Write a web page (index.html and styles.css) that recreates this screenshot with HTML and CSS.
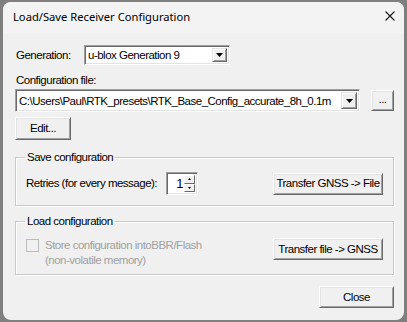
FILE: index.html
```html
<!DOCTYPE html>
<html>
<head>
<meta charset="utf-8">
<link rel="stylesheet" href="styles.css">
</head>
<body>
<div class="win">
  <div class="titlebar">
    <span class="title">Load/Save Receiver Configuration</span>
    <svg class="xicon" width="10" height="10" viewBox="0 0 10 10"><path d="M0.5 0.5 L9.5 9.5 M9.5 0.5 L0.5 9.5" stroke="#1a1a1a" stroke-width="1.1" fill="none"/></svg>
  </div>
  <div class="client">
    <div class="row gen">
      <span class="lbl gen-lbl">Generation:</span>
      <div class="combo gen-combo">
        <span class="val">u-blox Generation 9</span>
        <span class="drop"><svg width="7" height="4" viewBox="0 0 7 4"><path d="M0 0 H7 L3.5 4 Z" fill="#000"/></svg></span>
      </div>
    </div>
    <div class="lbl cfg-lbl">Configuration file:</div>
    <div class="row file">
      <div class="combo file-combo">
        <span class="val">C:\Users\Paul\RTK_presets\RTK_Base_Config_accurate_8h_0.1m</span>
        <span class="drop"><svg width="7" height="4" viewBox="0 0 7 4"><path d="M0 0 H7 L3.5 4 Z" fill="#000"/></svg></span>
      </div>
      <button class="btn dots">...</button>
    </div>
    <button class="btn edit">Edit...</button>
    <fieldset class="grp save">
      <legend>Save configuration</legend>
      <div class="row grp-row">
        <span class="lbl">Retries (for every message):</span>
        <div class="spin">
          <span class="spin-val">1</span>
          <span class="spin-btns">
            <span class="sb"><svg width="3" height="2" viewBox="0 0 3 2"><path d="M1.5 0 L3 2 H0 Z" fill="#000"/></svg></span>
            <span class="sb"><svg width="3" height="2" viewBox="0 0 3 2"><path d="M0 0 H3 L1.5 2 Z" fill="#000"/></svg></span>
          </span>
        </div>
        <button class="btn xfer">Transfer GNSS -&gt; File</button>
      </div>
    </fieldset>
    <fieldset class="grp load">
      <legend>Load configuration</legend>
      <div class="row grp-row load-row">
        <span class="chk"></span>
        <span class="chk-lbl">Store configuration intoBBR/Flash<br>(non-volatile memory)</span>
        <button class="btn xfer xfer2">Transfer file -&gt; GNSS</button>
      </div>
    </fieldset>
    <div class="foot">
      <button class="btn closebtn">Close</button>
    </div>
  </div>
</div>
</body>
</html>
```

FILE: styles.css
```css
html, body {
  margin: 0;
  padding: 0;
  background: #7f7f7f;
  width: 407px;
  height: 322px;
  overflow: hidden;
}
body {
  padding: 2px 0 0 3px;
  box-sizing: border-box;
  font-family: "Liberation Sans", Arial, sans-serif;
  font-size: 11.5px;
  letter-spacing: -0.5px;
  color: #000;
}
.win {
  width: 401px;
  height: 318px;
  background: #f0f0f0;
  border-radius: 8px;
  overflow: hidden;
}
.titlebar {
  height: 31px;
  background: #f3f3f3;
  display: flex;
  justify-content: space-between;
  align-items: flex-start;
}
.title {
  font-family: "Noto Sans", "Open Sans", sans-serif;
  font-size: 11.2px;
  letter-spacing: 0;
  line-height: 16px;
  padding: 7px 0 0 10px;
  color: #000;
}
.xicon {
  margin: 9px 9px 0 0;
}
.client {
  padding: 12px 10px 0 12px;
}
.row {
  display: flex;
  align-items: center;
}
.lbl {
  line-height: 13px;
  white-space: nowrap;
}
.gen {
  height: 20px;
}
.gen-lbl {
  width: 68px;
  padding-left: 1px;
}
.combo {
  display: flex;
  align-items: center;
  box-sizing: border-box;
  background: #fff;
  border-style: solid;
  border-width: 1px;
  border-color: #a0a0a0 #fff #fff #a0a0a0;
  box-shadow: inset 1px 1px 0 #696969, inset -1px -1px 0 #e3e3e3;
  padding: 2px;
}
.gen-combo {
  width: 146px;
  height: 20px;
}
.val {
  flex: 1;
  overflow: hidden;
  white-space: nowrap;
  line-height: 14px;
  padding-left: 1px;
}
.drop {
  width: 15px;
  height: 14px;
  box-sizing: border-box;
  background: #f0f0f0;
  border-style: solid;
  border-width: 1px;
  border-color: #e3e3e3 #696969 #696969 #e3e3e3;
  box-shadow: inset 1px 1px 0 #fff, inset -1px -1px 0 #a0a0a0;
  display: flex;
  align-items: center;
  justify-content: center;
}
.cfg-lbl {
  margin-top: 9px;
  padding-left: 1px;
}
.file {
  margin-top: 2px;
  height: 23px;
}
.file-combo {
  width: 346px;
  height: 23px;
}
.file-combo .drop {
  height: 17px;
  width: 16px;
}
.btn {
  font: inherit;
  letter-spacing: inherit;
  color: #000;
  margin: 0;
  padding: 0;
  box-sizing: border-box;
  background: #f0f0f0;
  border-style: solid;
  border-width: 1px;
  border-color: #fff #696969 #696969 #fff;
  box-shadow: inset 1px 1px 0 #e3e3e3, inset -1px -1px 0 #a0a0a0;
  border-radius: 0;
  display: flex;
  align-items: center;
  justify-content: center;
  line-height: 13px;
}
.dots {
  width: 23px;
  height: 21px;
  margin-left: 11px;
  align-items: flex-end;
  padding-bottom: 4px;
}
.edit {
  margin-top: 5px;
  width: 56px;
  height: 23px;
}
.grp {
  margin: 11px 0 0 0;
  min-width: 0;
  width: 379px;
  box-sizing: border-box;
  border: 1px solid #c9c9c9;
  box-shadow: inset 1px 1px 0 #fff, 1px 1px 0 #fff;
  padding: 8px 10px 10px 9px;
}
.grp legend {
  padding: 0 2px;
  line-height: 13px;
}
.grp-row {
  height: 23px;
}
.spin {
  display: flex;
  width: 32px;
  height: 23px;
  box-sizing: border-box;
  background: #fff;
  border-style: solid;
  border-width: 1px;
  border-color: #a0a0a0 #fff #fff #a0a0a0;
  box-shadow: inset 1px 1px 0 #696969, inset -1px -1px 0 #e3e3e3;
  padding: 2px;
}
.save .grp-row .lbl {
  width: 140px;
  padding-left: 1px;
}
.spin-val {
  flex: 1;
  text-align: right;
  font-size: 13px;
  line-height: 17px;
  padding-right: 1px;
}
.spin-btns {
  display: flex;
  flex-direction: column;
  width: 11px;
}
.sb {
  flex: 1;
  box-sizing: border-box;
  background: #f0f0f0;
  border-style: solid;
  border-width: 1px;
  border-color: #fff #696969 #696969 #fff;
  display: flex;
  align-items: center;
  justify-content: center;
}
.xfer {
  width: 110px;
  height: 22px;
  margin-left: auto;
}
.grp.load {
  margin-top: 9px;
  padding: 10px 10px 6px 9px;
}
.load-row {
  height: auto;
  align-items: flex-start;
}
.chk {
  width: 13px;
  height: 13px;
  box-sizing: border-box;
  border: 1px solid #bcbcbc;
  background: #f0f0f0;
  margin: 1px 0 0 1px;
}
.chk-lbl {
  color: #a0a0a0;
  line-height: 15px;
  margin-left: 6px;
  white-space: nowrap;
}
.foot {
  display: flex;
  justify-content: flex-end;
  margin-top: 11px;
}
.closebtn {
  width: 75px;
  height: 22px;
}
```
